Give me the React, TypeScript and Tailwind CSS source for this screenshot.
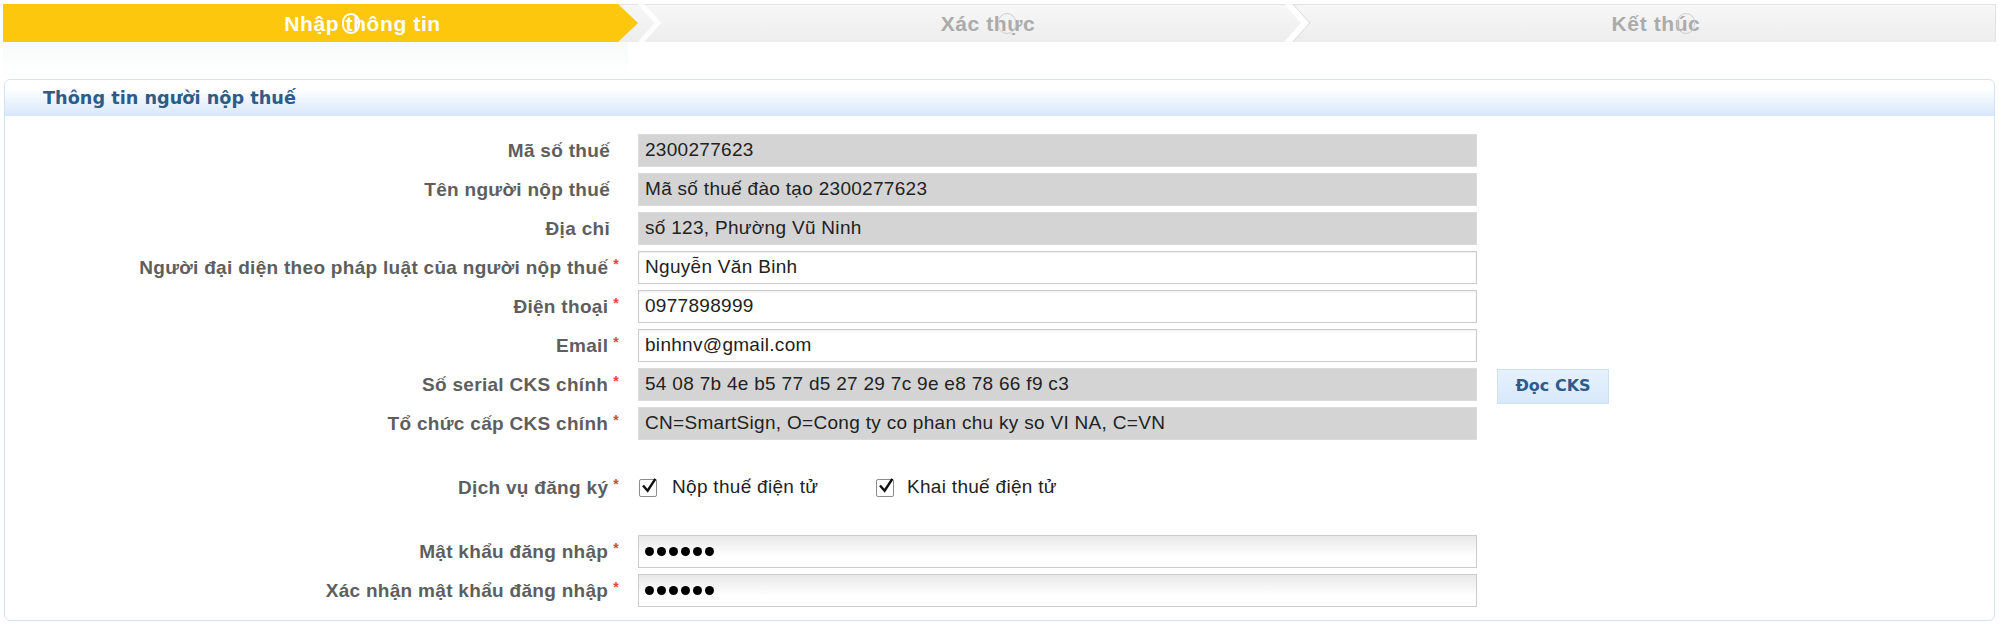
import React from 'react';

// Form rows for the taxpayer info panel
interface Row {
  label: string;
  value: string;
  disabled?: boolean;
  required?: boolean;
}

const rows: Row[] = [
  { label: 'Mã số thuế', value: '2300277623', disabled: true },
  { label: 'Tên người nộp thuế', value: 'Mã số thuế đào tạo 2300277623', disabled: true },
  { label: 'Địa chỉ', value: 'số 123, Phường Vũ Ninh', disabled: true },
  { label: 'Người đại diện theo pháp luật của người nộp thuế', value: 'Nguyễn Văn Binh', required: true },
  { label: 'Điện thoại', value: '0977898999', required: true },
  { label: 'Email', value: 'binhnv@gmail.com', required: true },
  { label: 'Số serial CKS chính', value: '54 08 7b 4e b5 77 d5 27 29 7c 9e e8 78 66 f9 c3', disabled: true, required: true },
  { label: 'Tổ chức cấp CKS chính', value: 'CN=SmartSign, O=Cong ty co phan chu ky so VI NA, C=VN', disabled: true, required: true },
];

function Label({ text, required }: { text: string; required?: boolean }) {
  return (
    <div className="w-[617px] shrink-0 text-right pr-[3px] text-[19px] font-bold tracking-[0.3px] text-[#5e5e5e] leading-none whitespace-nowrap">
      {text}
      {required ? (
        <span className="relative top-[-5px] ml-[5px] text-[14px] text-[#e8443a]">*</span>
      ) : (
        <span className="ml-[5px] inline-block w-[4px]" />
      )}
    </div>
  );
}

function Field({ row }: { row: Row }) {
  return (
    <div
      className={`ml-[16px] h-[33px] w-[839px] flex items-center px-[6px] border text-[19px] tracking-[0.3px] text-[#222] whitespace-nowrap ${
        row.disabled
          ? 'bg-[#d4d4d4] border-[#dadada]'
          : 'bg-white border-[#cccccc] shadow-[inset_0_1px_2px_rgba(0,0,0,0.08)]'
      }`}
    >
      {row.value}
    </div>
  );
}

function PasswordField() {
  return (
    <div className="ml-[16px] h-[33px] w-[839px] flex items-center gap-[3px] px-[6px] border border-[#cccccc] bg-[linear-gradient(#e8e8e8,#ffffff_65%)]">
      {[0, 1, 2, 3, 4, 5].map((i) => (
        <span key={i} className="w-[9px] h-[9px] rounded-full bg-black" />
      ))}
    </div>
  );
}

function CheckBox() {
  return (
    <span className="relative w-[18px] h-[18px] shrink-0 border border-[#8c8c8c] bg-white rounded-[2px]">
      <svg viewBox="0 0 18 18" className="absolute left-[1px] top-[-3px] w-[17px] h-[18px]">
        <path d="M3 9.5 L7 14 L14.5 2.5" fill="none" stroke="#111" strokeWidth="2.6" strokeLinecap="square" />
      </svg>
    </span>
  );
}

function Stepper() {
  return (
    <div className="relative mx-[3px] mt-[4px] h-[38px] flex border-t border-r border-[#e2e2e2] bg-[linear-gradient(#f7f7f7,#ededed)] font-['Liberation_Sans',Arial,sans-serif] font-bold text-[21px] tracking-[0.6px] leading-none">
      {/* step 1 - active */}
      <div className="relative w-[635px] shrink-0 flex items-center justify-center pl-[84px]">
        <div className="absolute inset-0 top-[-1px] bg-[#fdc70e] [clip-path:polygon(0_0,615px_0,635px_50%,615px_100%,0_100%)]" />
        <span className="relative text-white">Nhập thông tin</span>
        <span className="absolute left-[339px] top-[8px] w-[18px] h-[21px] rounded-full border-2 border-white" />
      </div>
      {/* step 2 */}
      <div className="relative w-[662px] shrink-0 flex items-center justify-center pl-[38px]">
        <span className="relative text-[#ababab]">Xác thực</span>
        <span className="absolute left-[360px] top-[8px] w-[18px] h-[21px] rounded-full border border-[#cfcfcf]" />
        <svg className="absolute left-[-2px] top-[-1px] w-[30px] h-[38px]" viewBox="0 0 30 38">
          <polyline points="4,-1 22,19 4,39" fill="none" stroke="#ffffff" strokeWidth="5" opacity="0.85" />
        </svg>
        <svg className="absolute right-[-14px] top-[-1px] w-[30px] h-[38px]" viewBox="0 0 30 38">
          <polyline points="3,-1 21,19 3,39" fill="none" stroke="#ffffff" strokeWidth="6" />
          <polyline points="8,-1 26,19 8,39" fill="none" stroke="#dcdcdc" strokeWidth="1" />
        </svg>
      </div>
      {/* step 3 */}
      <div className="relative flex-1 flex items-center justify-center pl-[17px]">
        <span className="relative text-[#ababab]">Kết thúc</span>
        <span className="absolute left-[377px] top-[8px] w-[18px] h-[21px] rounded-full border border-[#cfcfcf]" />
      </div>
    </div>
  );
}

export default function App() {
  return (
    <div className="w-[1999px] h-[636px] bg-white overflow-hidden font-['Liberation_Sans',Arial,sans-serif]">
      <Stepper />

      {/* faint reflection under the active step */}
      <div className="h-[37px] ml-[3px] w-[625px] bg-[linear-gradient(#f8fafa,#ffffff)]" />

      <div className="mx-[4px] h-[542px] border border-[#d3e3f4] rounded-[6px] bg-white">
        <div className="h-[36px] flex items-center pl-[38px] rounded-t-[6px] bg-[linear-gradient(#ffffff_25%,#d6e7fa)]">
          <span className="font-['DejaVu_Sans',Verdana,sans-serif] font-bold text-[17.7px] text-[#2d5b8a] whitespace-nowrap">
            Thông tin người nộp thuế
          </span>
        </div>

        <div className="pt-[18px] flex flex-col">
          <div className="flex flex-col gap-[6px]">
            {rows.map((row, i) => (
              <div key={row.label} className="flex items-center h-[33px]">
                <Label text={row.label} required={row.required} />
                <Field row={row} />
                {i === 6 && (
                  <button className="ml-[20px] h-[35px] w-[112px] mt-[3px] border border-[#cde0f5] bg-[linear-gradient(#e6f1fd,#d8e9fb)] font-['DejaVu_Sans',Verdana,sans-serif] font-bold text-[16px] text-[#2d5b8a]">
                    Đọc CKS
                  </button>
                )}
              </div>
            ))}
          </div>

          <div className="mt-[31px] flex items-center h-[33px]">
            <Label text="Dịch vụ đăng ký" required />
            <div className="ml-[17px] flex items-center">
              <div className="w-[237px] flex items-center gap-[15px]">
                <CheckBox />
                <span className="text-[19px] tracking-[0.3px] text-[#222] whitespace-nowrap">Nộp thuế điện tử</span>
              </div>
              <div className="flex items-center gap-[13px]">
                <CheckBox />
                <span className="text-[19px] tracking-[0.3px] text-[#222] whitespace-nowrap">Khai thuế điện tử</span>
              </div>
            </div>
          </div>

          <div className="mt-[31px] flex flex-col gap-[6px]">
            <div className="flex items-center h-[33px]">
              <Label text="Mật khẩu đăng nhập" required />
              <PasswordField />
            </div>
            <div className="flex items-center h-[33px]">
              <Label text="Xác nhận mật khẩu đăng nhập" required />
              <PasswordField />
            </div>
          </div>
        </div>
      </div>
    </div>
  );
}
